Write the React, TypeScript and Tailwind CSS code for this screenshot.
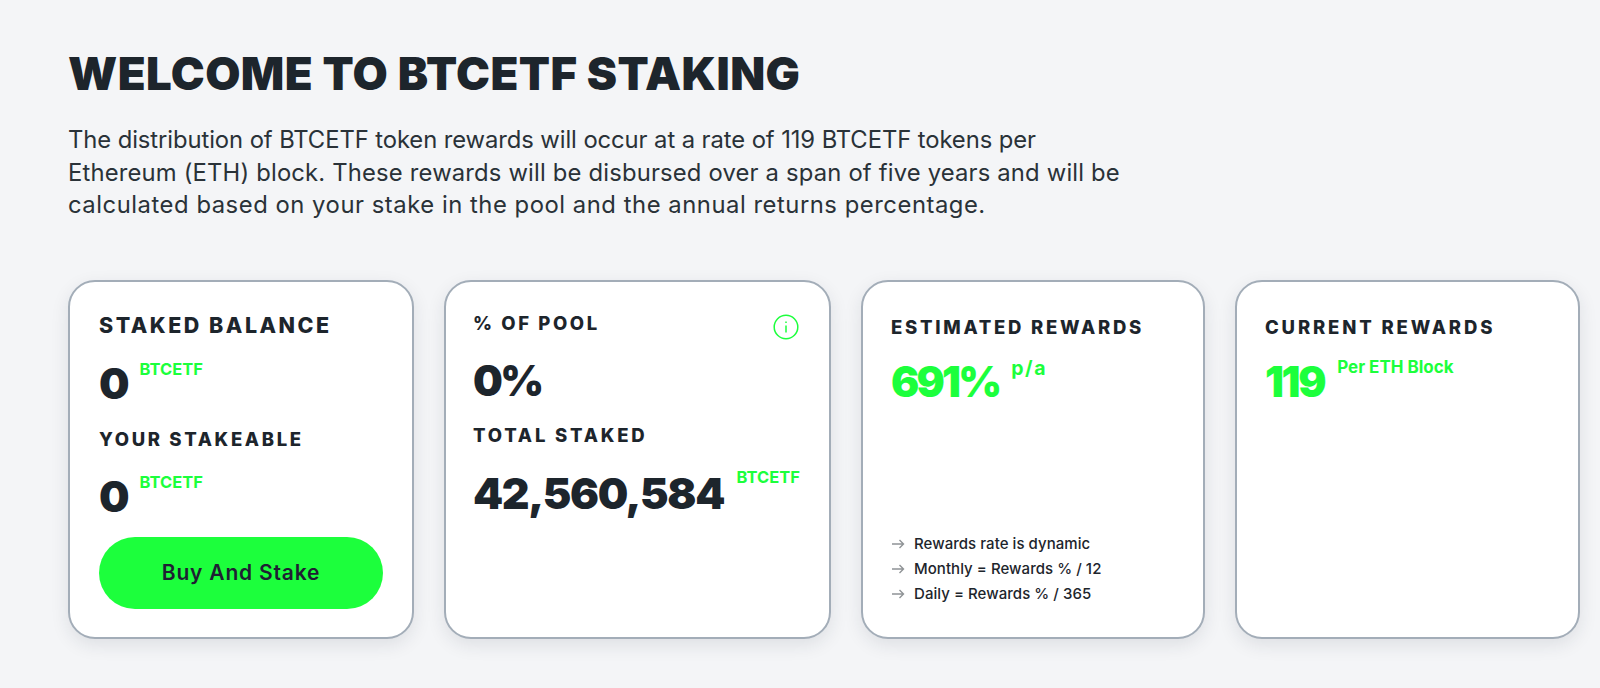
import React from "react";

function Label({ children, className = "" }: { children: React.ReactNode; className?: string }) {
  return <div className={`font-extrabold text-[#1d252c] uppercase leading-none whitespace-nowrap ${className}`}>{children}</div>;
}

function Unit({ children, className = "" }: { children: React.ReactNode; className?: string }) {
  return <span className={`font-bold text-[#1cff3c] leading-none whitespace-nowrap ${className}`}>{children}</span>;
}

function Note({ children }: { children: React.ReactNode }) {
  return (
    <div className="flex items-center h-[25px]">
      <svg width="14" height="12" viewBox="0 0 14 12" fill="none" stroke="#8f9396" strokeWidth="1.4" className="mr-[9px] shrink-0">
        <path d="M1 6h11.5M8.5 2l4 4-4 4" />
      </svg>
      <span className="text-[15px] text-[#1d252c] font-medium tracking-[0.05px] whitespace-nowrap">{children}</span>
    </div>
  );
}

const card = "bg-white border-2 border-[#a3adb8] rounded-[27px] h-[359px] shadow-[0_6px_18px_rgba(30,40,60,0.10)] shrink-0";

export default function App() {
  return (
    <div className="w-[1600px] h-[688px] bg-[#f4f5f7] overflow-hidden font-['Inter','Liberation_Sans',sans-serif] pl-[68px] pt-[47px]">
      <h1 className="text-[45.5px] font-black text-[#1d252c] leading-[54px] tracking-[0.4px] whitespace-nowrap">WELCOME TO BTCETF STAKING</h1>
      <p className="mt-[23px] text-[23.8px] leading-[32.5px] text-[#2a3238] whitespace-nowrap">
        <span className="tracking-[-0.08px]">The distribution of BTCETF token rewards will occur at a rate of 119 BTCETF tokens per</span>
        <br />
        <span className="tracking-[0.18px]">Ethereum (ETH) block. These rewards will be disbursed over a span of five years and will be</span>
        <br />
        <span className="tracking-[0.54px]">calculated based on your stake in the pool and the annual returns percentage.</span>
      </p>
      <div className="flex gap-[30px] mt-[58px]">
        <div className={`${card} w-[346px] pl-[29px] pr-[29px] pt-[33px]`}>
          <Label className="text-[21.5px] tracking-[2.5px]">Staked Balance</Label>
          <div className="flex mt-[25px] h-[44px]">
            <span className="text-[43px] font-black text-[#1d252c] leading-[44px]">0</span>
            <Unit className="text-[16.5px] ml-[10px]">BTCETF</Unit>
          </div>
          <Label className="text-[18.5px] tracking-[2.65px] mt-[25px]">Your Stakeable</Label>
          <div className="flex mt-[25px] h-[44px]">
            <span className="text-[43px] font-black text-[#1d252c] leading-[44px]">0</span>
            <Unit className="text-[16.5px] ml-[10px]">BTCETF</Unit>
          </div>
          <div className="mt-[19px] h-[72px] rounded-full bg-[#1cff3c] flex items-center justify-center text-[21px] font-semibold text-[#1f1f33] tracking-[0.8px]">
            Buy And Stake
          </div>
        </div>

        <div className={`${card} w-[387px] pl-[27px] pr-[29px] pt-[32px] relative`}>
          <svg width="26" height="26" viewBox="0 0 26 26" fill="none" stroke="#1cff3c" strokeWidth="1.5" className="absolute right-[30px] top-[32px]">
            <circle cx="13" cy="13" r="11.8" />
            <path d="M13 11.5v7M13 7.5v1.6" />
          </svg>
          <Label className="text-[18.5px] tracking-[2.6px]">% of Pool</Label>
          <div className="text-[42px] font-black text-[#1d252c] leading-[44px] mt-[27px] tracking-[-2.5px]">0%</div>
          <Label className="text-[18.5px] tracking-[2.8px] mt-[23px]">Total Staked</Label>
          <div className="flex mt-[26px] h-[44px]">
            <span className="text-[43px] font-black text-[#1d252c] leading-[44px] tracking-[-1.4px]">42,560,584</span>
            <Unit className="text-[16.5px] ml-auto mt-[-2px]">BTCETF</Unit>
          </div>
        </div>

        <div className={`${card} w-[344px] pl-[28px] pr-[19px] pt-[36px] flex flex-col`}>
          <Label className="text-[18.5px] tracking-[2.75px]">Estimated Rewards</Label>
          <div className="flex mt-[24px] h-[44px]">
            <span className="text-[42px] font-black text-[#1cff3c] leading-[44px] tracking-[-2.8px]">691%</span>
            <Unit className="text-[19.5px] ml-[12px] tracking-[1.5px] mt-[-1px]">p/a</Unit>
          </div>
          <div className="mt-auto mb-[30px]">
            <Note>Rewards rate is dynamic</Note>
            <Note>Monthly = Rewards % / 12</Note>
            <Note>Daily = Rewards % / 365</Note>
          </div>
        </div>

        <div className={`${card} w-[345px] pl-[28px] pr-[19px] pt-[36px]`}>
          <Label className="text-[18.5px] tracking-[2.85px]">Current Rewards</Label>
          <div className="flex mt-[24px] h-[44px]">
            <span className="text-[42px] font-black text-[#1cff3c] leading-[44px] tracking-[-2.4px]">119</span>
            <Unit className="text-[17px] ml-[13px] mt-[-1px]">Per ETH Block</Unit>
          </div>
        </div>
      </div>
    </div>
  );
}
